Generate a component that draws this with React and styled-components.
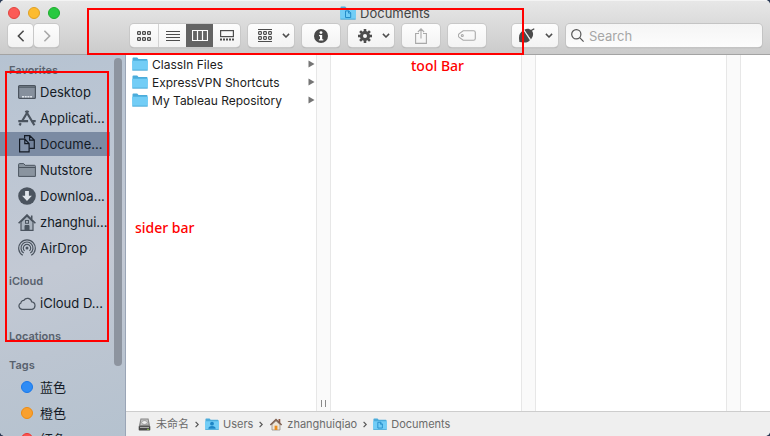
import React from "react";
import styled, { createGlobalStyle } from "styled-components";

const GlobalStyle = createGlobalStyle`
  * { box-sizing: border-box; }
  body {
    margin: 0;
    background: #2b3a55;
    font-family: Inter, "Noto Sans CJK SC", sans-serif;
    font-size: 13px;
  }
  ul, ol { list-style: none; margin: 0; padding: 0; }
  svg { display: block; flex: none; }
`;

/* ---------- window ---------- */

const Window = styled.div`
  position: relative;
  display: flex;
  flex-direction: column;
  height: 100vh;
  overflow: hidden;
  border-radius: 5px;
  background: #fff;
`;

const Header = styled.header`
  flex: none;
  background: linear-gradient(#e7e7e7, #cbcbcb);
  border-top: 1px solid #f4f4f4;
  border-bottom: 1px solid #a3a3a3;
  padding: 0 8px 7px;
`;

const TitleRow = styled.div`
  display: grid;
  grid-template-columns: 1fr auto 1fr;
  align-items: center;
  height: 23px;
`;

const Lights = styled.div`
  display: flex;
  gap: 8px;
`;

const Light = styled.button`
  width: 12px;
  height: 12px;
  padding: 0;
  border-radius: 50%;
  border: 1px solid ${(p) => p.$edge};
  background: ${(p) => p.$fill};
`;

const Title = styled.h1`
  display: flex;
  align-items: center;
  gap: 4px;
  height: 20px;
  margin: 0;
  font-size: 13px;
  line-height: 16px;
  font-weight: 400;
  color: #444;
`;

const Toolbar = styled.div`
  display: flex;
  align-items: center;
  gap: 8px;
`;

const Group = styled.div`
  display: flex;
  gap: ${(p) => p.$gap || 0}px;
  margin-right: ${(p) => p.$after || 0}px;
`;

const ToolButton = styled.button`
  display: flex;
  align-items: center;
  justify-content: center;
  gap: 10px;
  width: ${(p) => p.$w}px;
  height: 23px;
  padding: 0 0 0 ${(p) => p.$lead || 0}px;
  border: 0;
  border-radius: 4px;
  background: linear-gradient(#fdfdfd, #f3f3f3);
  box-shadow: 0 0 0 1px #c8c8c8, 0 1px 1px #9a9a9a;
  color: ${(p) => (p.$dim ? "#a9a9a9" : "#4d4d4d")};
`;

const Segments = styled.div`
  display: flex;
  height: 23px;
  border-radius: 4px;
  overflow: hidden;
  box-shadow: 0 0 0 1px #c8c8c8, 0 1px 1px #9a9a9a;
`;

const Segment = styled.button`
  display: flex;
  align-items: center;
  justify-content: center;
  width: ${(p) => p.$w}px;
  padding: 0;
  border: 0;
  border-right: ${(p) => (p.$line ? "1px solid #d3d3d3" : "0")};
  background: ${(p) => (p.$on ? "#646464" : "linear-gradient(#fdfdfd, #f3f3f3)")};
  color: ${(p) => (p.$on ? "#fff" : "#4d4d4d")};
`;

const SearchBox = styled.label`
  display: flex;
  flex: 1;
  min-width: 0;
  align-items: center;
  gap: 5px;
  height: 23px;
  padding: 0 5px;
  border-radius: 4px;
  background: linear-gradient(#f5f5f5, #fcfcfc);
  box-shadow: 0 0 0 1px #c4c4c4, 0 1px 1px #9a9a9a;
  color: #555;
`;

const SearchInput = styled.input`
  flex: 1;
  min-width: 0;
  padding: 0;
  border: 0;
  outline: 0;
  background: transparent;
  font: inherit;
  color: #333;
  &::placeholder { color: #a6a6a6; opacity: 1; }
`;

/* ---------- sidebar ---------- */

const Body = styled.div`
  display: flex;
  flex: 1;
  min-height: 0;
`;

const Sidebar = styled.nav`
  display: flex;
  justify-content: space-between;
  flex: none;
  width: 126px;
  overflow: hidden;
  border-right: 1px solid #9aa5b6;
  background: linear-gradient(165deg, #b6c3d2 0%, #bcc6d3 25%, #c3c9d4 55%, #bcc5d1 75%, #b5c2cf 100%);
`;

const Sections = styled.div`
  display: flex;
  flex-direction: column;
  gap: 13px;
  width: 110px;
  padding-top: 7px;
`;

const Section = styled.section`
  display: flex;
  flex-direction: column;
  gap: 2px;
`;

const SectionTitle = styled.h2`
  margin: 0;
  padding-left: 9px;
  font-size: 11px;
  line-height: 16px;
  font-weight: 600;
  color: #58616d;
`;

const Items = styled.ul`
  display: flex;
  flex-direction: column;
  gap: 2px;
`;

const Item = styled.a`
  display: flex;
  align-items: center;
  gap: 4px;
  height: 24px;
  padding-left: 18px;
  line-height: 16px;
  white-space: nowrap;
  text-decoration: none;
  color: #141b26;
  background: ${(p) => (p.$on ? "#7b8ba3" : "transparent")};
`;

const ItemIcon = styled.span`
  display: flex;
  justify-content: center;
  width: 18px;
  color: ${(p) => (p.$on ? "#141b26" : "#4b545f")};
`;

const TagDot = styled.span`
  width: 12px;
  height: 12px;
  border-radius: 50%;
  border: 1px solid ${(p) => p.$edge};
  background: ${(p) => p.$fill};
`;

const SidebarScroll = styled.div`
  flex: none;
  width: 8px;
  height: 308px;
  margin: 3px 3px 0 0;
  border-radius: 4px;
  background: #8d949f;
`;

/* ---------- columns ---------- */

const Main = styled.main`
  display: flex;
  flex: 1;
  flex-direction: column;
  min-width: 0;
`;

const Columns = styled.div`
  display: flex;
  flex: 1;
  min-height: 0;
  overflow: hidden;
`;

const Column = styled.div`
  display: flex;
  flex: ${(p) => (p.$last ? "1" : "none")};
  width: ${(p) => (p.$last ? "auto" : "205px")};
`;

const Files = styled.ul`
  flex: 1;
`;

const FileRow = styled.button`
  display: flex;
  align-items: center;
  gap: 4px;
  width: 100%;
  height: 18px;
  padding: 0 1px 0 6px;
  border: 0;
  background: transparent;
  font: inherit;
  font-size: 12px;
  color: #1c1c1c;
  text-align: left;
`;

const FileName = styled.span`
  flex: 1;
  white-space: nowrap;
`;

const ColumnScroll = styled.div`
  display: flex;
  align-items: flex-end;
  justify-content: center;
  gap: 3px;
  width: 15px;
  padding-bottom: 4px;
  border: solid #e7e7e7;
  border-width: 0 1px;
  background: #fafafa;
`;

const Grip = styled.span`
  width: 1px;
  height: 7px;
  background: #8a8a8a;
`;

const PathBar = styled.footer`
  flex: none;
  height: 25px;
  padding: 0 12px;
  border-top: 1px solid #cdcdcd;
  background: #efefef;
`;

const Crumbs = styled.ol`
  display: flex;
  align-items: center;
  height: 24px;
  gap: 6px;
`;

const Crumb = styled.li`
  display: flex;
  align-items: center;
  gap: 4px;
  font-size: 11px;
  line-height: 16px;
  color: #6b6b6b;
  white-space: nowrap;
`;

/* ---------- annotations over the window ---------- */

const Frame = styled.div`
  position: absolute;
  left: ${(p) => p.$x}px;
  top: ${(p) => p.$y}px;
  width: ${(p) => p.$w}px;
  height: ${(p) => p.$h}px;
  border: 2px solid #f00;
  pointer-events: none;
`;

const Note = styled.span`
  position: absolute;
  left: ${(p) => p.$x}px;
  top: ${(p) => p.$y}px;
  font-family: "Noto Sans", "Open Sans", sans-serif;
  font-size: 14px;
  font-weight: 500;
  line-height: 20px;
  color: #f00;
`;

/* ---------- icons ---------- */

const Svg = ({ w, h, children, ...rest }) => (
  <svg width={w} height={h} viewBox={`0 0 ${w} ${h}`} fill="none" stroke="currentColor" aria-hidden="true" {...rest}>
    {children}
  </svg>
);

const Squares = ({ y }) =>
  [0, 5, 10].map((x) => <rect key={x} x={x + 0.6} y={y + 0.6} width="2.8" height="2.8" rx="0.6" />);

const GridIcon = () => (
  <Svg w={14} h={10} strokeWidth="1.2"><Squares y={0} /><Squares y={6} /></Svg>
);
const ListIcon = () => (
  <Svg w={14} h={10}><path d="M0 .5h14M0 3.5h14M0 6.5h14M0 9.5h14" /></Svg>
);
const ColumnsIcon = () => (
  <Svg w={16} h={11}><path d="M.5 .5h15v10H.5zM5.5 .5v10M10.5 .5v10" strokeWidth="1.2" /></Svg>
);
const GalleryIcon = () => (
  <Svg w={14} h={11}>
    <rect x=".6" y=".6" width="12.8" height="6" strokeWidth="1.2" />
    <path d="M0 9.5h2M3 9.5h2M6 9.5h2M9 9.5h2M12 9.5h2" strokeWidth="2" />
  </Svg>
);
const ArrangeIcon = () => (
  <Svg w={14} h={13} strokeWidth="1.1">
    <path d="M0 .5h14M0 12.5h14" />
    <Squares y={2} /><Squares y={7} />
  </Svg>
);
const Chevron = () => (
  <Svg w={8} h={5}><path d="M.9 .9L4 4 7.1 .9" strokeWidth="1.5" /></Svg>
);
const BackIcon = () => (
  <Svg w={8} h={12}><path d="M6.6 .8L1.4 6l5.2 5.2" strokeWidth="1.6" /></Svg>
);
const ForwardIcon = () => (
  <Svg w={8} h={12}><path d="M1.4 .8L6.6 6l-5.2 5.2" strokeWidth="1.6" /></Svg>
);
const InfoIcon = () => (
  <Svg w={14} h={14} stroke="none">
    <circle cx="7" cy="7" r="7" fill="#484848" />
    <circle cx="7" cy="3.6" r="1.4" fill="#fff" />
    <path d="M5 6h3.2v4.2h1.1v1.3H4.9v-1.3H6V7.3H5z" fill="#fff" />
  </Svg>
);
const GearIcon = () => (
  <Svg w={14} h={14}>
    {[0, 45, 90, 135].map((a) => (
      <path key={a} d="M7 0v14" strokeWidth="2.6" transform={`rotate(${a} 7 7)`} />
    ))}
    <circle cx="7" cy="7" r="3.6" strokeWidth="3" />
    <circle cx="7" cy="7" r="2" fill="#f8f8f8" stroke="none" />
  </Svg>
);
const ShareIcon = () => (
  <Svg w={12} h={16} strokeWidth="1.1">
    <path d="M4 5.5H.6v9.900h10.800V5.500H8M6 10.500V1M2.900 4L6 .9 9.100 4" />
  </Svg>
);
const TagIcon = () => (
  <Svg w={18} h={11} strokeWidth="1.1">
    <path d="M5.2 .7h10.300a1.800 1.800 0 0 1 1.800 1.800v6a1.800 1.800 0 0 1-1.800 1.800H5.200L1 7.200Q-.3 5.500 1 3.800z" />
    <circle cx="4.3" cy="5.5" r="1" />
  </Svg>
);
const AcornIcon = () => (
  <Svg w={17} h={15} stroke="none" fill="#4a4a4a">
    <path d="M5.6 2.600C2.500 4 .8 6.700 1 10l.3 4.100 4.600.4c2.500.2 4.600-.6 6-2.300z" />
    <path d="M6.300 1.700C8.600 .2 11.500 .4 13.500 2.300c2.200 2.300 2.200 5.800-.6 9.100z" />
    <path d="M5.800 2l7 9.700" stroke="#e6e6e6" strokeWidth=".7" />
    <path d="M13 2.600l3.300-1.800" stroke="#4a4a4a" strokeWidth="1.200" />
  </Svg>
);
const SearchIcon = () => (
  <Svg w={13} h={13} strokeWidth="1.2">
    <circle cx="5.3" cy="5.3" r="4.6" /><path d="M8.7 8.7l3.9 3.9" />
  </Svg>
);

const Folder = ({ size = 16, mark }) => (
  <svg width={size} height={size * 0.875} viewBox="0 0 16 14" aria-hidden="true">
    <path d="M.5 1.5Q.5.5 1.4.5h3.800l1.300 1.400h8.100q.9 0 .9.900v9.800H.5z" fill="#4bacdb" />
    <path d="M0 3.7h16l-.3 9.300H.3z" fill="#72cdf6" />
    <path d="M.3 13.2h15.400" stroke="#3ea4d5" strokeWidth=".9" />
    {mark === "doc" && <path d="M5.500 4.900h3.300l1.900 1.900v4.700H5.500zM8.500 4.900v2.200h2.200" fill="none" stroke="#238cc9" />}
    {mark === "user" && (
      <g fill="#1f86c6"><circle cx="8" cy="6.5" r="2.2" /><path d="M3.800 12.200q.2-3.200 4.200-3.200t4.200 3.200z" /></g>
    )}
  </svg>
);

const DesktopIcon = () => (
  <Svg w={18} h={14}>
    <rect x=".6" y=".6" width="16.8" height="12.8" rx="1" fill="#86909d" strokeWidth="1.2" />
    <path d="M1 2.2h16" /><path d="M4 11.8h10" stroke="#dfe4ea" strokeWidth="1.6" strokeDasharray="2 .7" />
  </Svg>
);
const AppsIcon = () => (
  <Svg w={18} h={16} strokeWidth="2.2">
    <path d="M10.300 .7L4.300 10.700M2.800 13.200L1.500 15.300M7.700 .7l8.700 14.600M.3 11.200h9.800M13 11.200h4.700" />
  </Svg>
);
const DocsIcon = () => (
  <Svg w={18} h={18} strokeWidth="1.2">
    <path d="M6.600 3.600V.7h5.200l4.500 4.300v8.300h-5M11.600 .9v4.300h4.500" fill="#73839c" />
    <path d="M1.600 4.200h5.200l4.300 4.300v8.300H1.600zM6.800 4.300v4.400h4.300" fill="#8392a9" />
  </Svg>
);
const FolderIcon = () => (
  <Svg w={18} h={14}>
    <path d="M.6 13.400V1.500q0-.9.9-.9h4.200l1.500 1.700h9.200q1 0 1 1v10.100z" fill="#8a949f" /><path d="M1 4.500h16" />
  </Svg>
);
const DownloadIcon = () => (
  <Svg w={18} h={18} stroke="none">
    <circle cx="9" cy="9" r="8.8" fill="currentColor" />
    <path d="M7.100 4h3.800v4.700h3L9 14 4.100 8.700h3z" fill="#e0e5eb" />
  </Svg>
);
const HomeIcon = () => (
  <Svg w={18} h={17}>
    <path d="M3 7.800v8.500h12V7.800L9 2z" fill="#aab3be" strokeWidth="1.2" />
    <path d="M.6 9.200L9 1l8.400 8.200M13.700 5V1.500" strokeWidth="1.6" />
    <rect x="7.5" y="6.5" width="3" height="2.8" /><path d="M7 16v-4.500h4V16" fill="currentColor" />
  </Svg>
);
const AirDropIcon = () => (
  <Svg w={18} h={18} strokeWidth="1.2">
    <path d="M4.800 16.300a8.300 8.300 0 1 1 8.400 0" />
    <path d="M5.700 14a6 6 0 1 1 6.600 0" />
    <path d="M6.600 11.900a3.700 3.700 0 1 1 4.800 0" />
    <circle cx="9" cy="9" r="1.5" fill="currentColor" stroke="none" />
  </Svg>
);
const CloudIcon = () => (
  <Svg w={18} h={13} strokeWidth="1.2">
    <path d="M4.200 12.300A3.300 3.300 0 0 1 2.900 6 2.700 2.700 0 0 1 5.800 3.400 4.300 4.300 0 0 1 13.700 4.800a3.800 3.800 0 0 1 .2 7.500z" />
  </Svg>
);
const DiskIcon = () => (
  <svg width="14" height="13" viewBox="0 0 14 13" aria-hidden="true">
    <path d="M2.500 .5h8L12.300 9H.7z" fill="#858585" /><path d="M3.300 1.500h6.400l.8 4.900-8 .5z" fill="#c7c7c7" />
    <ellipse cx="6.5" cy="4.5" rx="2.8" ry="1.9" fill="#efefef" stroke="#777" strokeWidth=".6" />
    <rect x=".7" y="8.2" width="11.6" height="4.3" rx=".8" fill="#484848" /><path d="M2 9.500h9" stroke="#aaa" /><path d="M9 11.300h2" stroke="#8bc34a" />
  </svg>
);
const SmallHome = () => (
  <svg width="14" height="13" viewBox="-1 0 14 13" aria-hidden="true">
    <path d="M8.500 1h1.800v4H8.500z" fill="#8d5844" /><path d="M2 6.500L6 3l4 3.500V12H2z" fill="#eee5d7" stroke="#8a8278" strokeWidth=".7" />
    <path d="M.4 7L6 1.500 11.600 7" fill="none" stroke="#7b5d4d" strokeWidth="1.5" />
    <path d="M4.600 12V7.700h2.800V12z" fill="#eb8e20" />
  </svg>
);
const PathArrow = () => (
  <Svg w={4} h={7}><path d="M.6 .8l2.600 2.700L.6 6.200" stroke="#555" strokeWidth="1.2" /></Svg>
);
const RowArrow = () => (
  <svg width="7" height="8" viewBox="0 0 7 8" aria-hidden="true"><path d="M.5 .5l6 3.500-6 3.500z" fill="#757575" /></svg>
);

/* ---------- data ---------- */

const sections = [
  {
    title: "Favorites",
    items: [
      { label: "Desktop", Icon: DesktopIcon },
      { label: "Applicati...", Icon: AppsIcon },
      { label: "Docume...", Icon: DocsIcon, on: true },
      { label: "Nutstore", Icon: FolderIcon },
      { label: "Downloa...", Icon: DownloadIcon },
      { label: "zhanghui...", Icon: HomeIcon },
      { label: "AirDrop", Icon: AirDropIcon },
    ],
  },
  { title: "iCloud", items: [{ label: "iCloud D...", Icon: CloudIcon }] },
  { title: "Locations" },
  {
    title: "Tags",
    items: [
      { label: "蓝色", fill: "#2f8cf5", edge: "#1877ea" },
      { label: "橙色", fill: "#f9a02f", edge: "#ee8b11" },
      { label: "红色", fill: "#fb5450", edge: "#ea3531" },
    ],
  },
];

const files = ["ClassIn Files", "ExpressVPN Shortcuts", "My Tableau Repository"];

const crumbs = [
  { label: "未命名", icon: <DiskIcon /> },
  { label: "Users", icon: <Folder size={14} mark="user" /> },
  { label: "zhanghuiqiao", icon: <SmallHome /> },
  { label: "Documents", icon: <Folder size={14} mark="doc" /> },
];

export default function App() {
  return (
    <Window>
      <GlobalStyle />
      <Header>
        <TitleRow>
          <Lights>
            <Light aria-label="Close" $fill="#fc5b57" $edge="#e2443f" />
            <Light aria-label="Minimize" $fill="#fdbb2e" $edge="#e0a023" />
            <Light aria-label="Zoom" $fill="#28c940" $edge="#1dac2c" />
          </Lights>
          <Title><Folder mark="doc" />Documents</Title>
        </TitleRow>
        <Toolbar>
          <Group $gap={1} $after={63}>
            <ToolButton $w={25} aria-label="Back"><BackIcon /></ToolButton>
            <ToolButton $w={25} $dim aria-label="Forward"><ForwardIcon /></ToolButton>
          </Group>
          <Segments>
            <Segment $w={29} $line aria-label="Icons"><GridIcon /></Segment>
            <Segment $w={27} aria-label="List"><ListIcon /></Segment>
            <Segment $w={27} $on aria-label="Columns"><ColumnsIcon /></Segment>
            <Segment $w={27} aria-label="Gallery"><GalleryIcon /></Segment>
          </Segments>
          <Group $gap={8} $after={18}>
            <ToolButton $w={46} $lead={5} aria-label="Group"><ArrangeIcon /><Chevron /></ToolButton>
            <ToolButton $w={38} aria-label="Get info"><InfoIcon /></ToolButton>
            <ToolButton $w={46} $lead={5} aria-label="Actions"><GearIcon /><Chevron /></ToolButton>
            <ToolButton $w={38} $dim aria-label="Share"><ShareIcon /></ToolButton>
            <ToolButton $w={38} $dim aria-label="Edit tags"><TagIcon /></ToolButton>
          </Group>
          <ToolButton $w={46} aria-label="Nutstore"><AcornIcon /><Chevron /></ToolButton>
          <SearchBox>
            <SearchIcon />
            <SearchInput type="search" placeholder="Search" aria-label="Search" />
          </SearchBox>
        </Toolbar>
      </Header>

      <Body>
        <Sidebar>
          <Sections>
            {sections.map(({ title, items }) => (
              <Section key={title}>
                <SectionTitle>{title}</SectionTitle>
                {items && (
                  <Items>
                    {items.map(({ label, Icon, on, fill, edge }) => (
                      <li key={label}>
                        <Item href="#" $on={on}>
                          <ItemIcon $on={on}>{Icon ? <Icon /> : <TagDot $fill={fill} $edge={edge} />}</ItemIcon>
                          {label}
                        </Item>
                      </li>
                    ))}
                  </Items>
                )}
              </Section>
            ))}
          </Sections>
          <SidebarScroll />
        </Sidebar>

        <Main>
          <Columns>
            <Column>
              <Files>
                {files.map((name) => (
                  <li key={name}>
                    <FileRow><Folder /><FileName>{name}</FileName><RowArrow /></FileRow>
                  </li>
                ))}
              </Files>
              <ColumnScroll><Grip /><Grip /></ColumnScroll>
            </Column>
            <Column><Files /><ColumnScroll /></Column>
            <Column><Files /><ColumnScroll /></Column>
            <Column $last />
          </Columns>
          <PathBar>
            <Crumbs>
              {crumbs.map(({ label, icon }, i) => (
                <React.Fragment key={label}>
                  {i > 0 && <li><PathArrow /></li>}
                  <Crumb>{icon}{label}</Crumb>
                </React.Fragment>
              ))}
            </Crumbs>
          </PathBar>
        </Main>
      </Body>

      <Frame $x={87} $y={8} $w={437} $h={47} />
      <Frame $x={5} $y={71} $w={104} $h={271} />
      <Note $x={411} $y={56}>tool Bar</Note>
      <Note $x={135} $y={218}>sider bar</Note>
    </Window>
  );
}
